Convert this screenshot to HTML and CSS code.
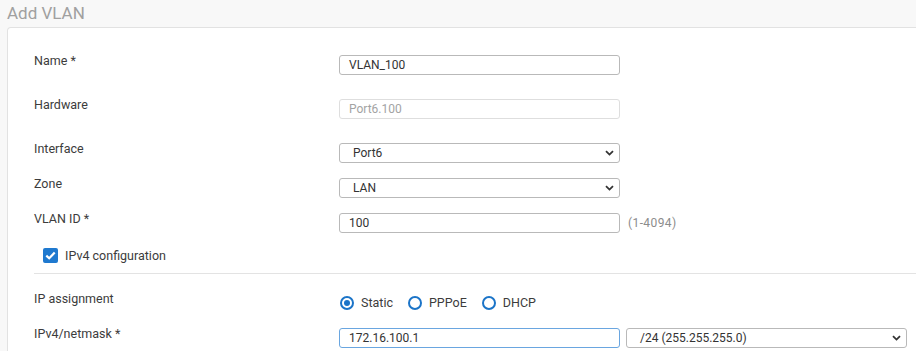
FILE: index.html
```html
<!DOCTYPE html>
<html lang="en">
<head>
  <meta charset="UTF-8">
  <meta name="viewport" content="width=device-width, initial-scale=1.0">
  <title>Add VLAN</title>
  <link rel="stylesheet" href="styles.css">
</head>
<body>
  <!-- page title -->
  <div class="page-title">Add VLAN</div>

  <div class="card">
    <div class="row gap-lg">
      <div class="label">Name *</div>
      <div class="field">VLAN_100</div>
    </div>

    <div class="row gap-lg">
      <div class="label">Hardware</div>
      <div class="field disabled">Port6.100</div>
    </div>

    <div class="row gap-sm">
      <div class="label">Interface</div>
      <div class="field select">
        <span>Port6</span>
        <svg class="chevron" width="9" height="6" viewBox="0 0 9 6"><path d="M1 1.2 L4.5 4.6 L8 1.2" fill="none" stroke="#333" stroke-width="1.8"/></svg>
      </div>
    </div>

    <div class="row gap-sm">
      <div class="label">Zone</div>
      <div class="field select">
        <span>LAN</span>
        <svg class="chevron" width="9" height="6" viewBox="0 0 9 6"><path d="M1 1.2 L4.5 4.6 L8 1.2" fill="none" stroke="#333" stroke-width="1.8"/></svg>
      </div>
    </div>

    <div class="row">
      <div class="label">VLAN ID *</div>
      <div class="field">100</div>
      <span class="hint">(1-4094)</span>
    </div>

    <!-- IPv4 section -->
    <div class="check-row">
      <span class="checkbox">
        <svg width="11" height="9" viewBox="0 0 11 9"><path d="M1.3 4.6 L4.2 7.3 L9.7 1.6" fill="none" stroke="#fff" stroke-width="2.2"/></svg>
      </span>
      <span class="check-text">IPv4 configuration</span>
    </div>

    <div class="divider"></div>

    <div class="row radio-row">
      <div class="label">IP assignment</div>
      <div class="radios">
        <label class="radio"><span class="dot checked"></span>Static</label>
        <label class="radio"><span class="dot"></span>PPPoE</label>
        <label class="radio"><span class="dot"></span>DHCP</label>
      </div>
    </div>

    <div class="row">
      <div class="label">IPv4/netmask *</div>
      <div class="field focused">172.16.100.1</div>
      <div class="field select mask">
        <span>/24 (255.255.255.0)</span>
        <svg class="chevron" width="9" height="6" viewBox="0 0 9 6"><path d="M1 1.2 L4.5 4.6 L8 1.2" fill="none" stroke="#333" stroke-width="1.8"/></svg>
      </div>
    </div>
  </div>
</body>
</html>
```

FILE: styles.css
```css
body {
    margin: 0;
    font-family: Roboto, "Liberation Sans", Arial, sans-serif;
    background-color: #f8f8f8;
    color: #3a3a3a;
    overflow: hidden;
}

/* title bar */
.page-title {
    height: 27px;
    padding-left: 7px;
    font-size: 17px;
    line-height: 26px;
    color: #a0a0a0;
}

.card {
    margin-left: 7px;
    margin-right: -10px;
    background: #fff;
    border: 1px solid #e2e2e2;
    border-bottom: none;
    border-radius: 4px 0 0 0;
    padding: 27px 0 4px 26px;
}

.row {
    display: flex;
    align-items: flex-start;
}

.row.gap-lg {
    margin-bottom: 24px;
}

.row.gap-sm {
    margin-bottom: 15px;
}

.label {
    width: 305px;
    flex-shrink: 0;
    margin-top: -1px;
    font-size: 12.5px;
    line-height: 14px;
    color: #3c3c3c;
}

.field {
    width: 281px;
    height: 20px;
    box-sizing: border-box;
    border: 1px solid #b9b9b9;
    border-radius: 3px;
    padding: 0 9px;
    font-size: 12px;
    line-height: 18px;
    color: #333;
    flex-shrink: 0;
}

.field.disabled {
    border-color: #dedede;
    color: #a3a3a3;
}

.field.focused {
    border-color: #6aa6e0;
}

.field.select {
    display: flex;
    justify-content: space-between;
    align-items: center;
    padding: 0 5px 0 13px;
}

.field.mask {
    margin-left: 6px;
    padding-left: 13px;
}

.chevron {
    display: block;
}

.hint {
    margin-left: 8px;
    font-size: 12px;
    letter-spacing: 0.4px;
    line-height: 20px;
    color: #8c8c8c;
}

/* checkbox */
.check-row {
    display: flex;
    align-items: center;
    margin-top: 14px;
    margin-left: 9px;
    height: 16px;
}

.checkbox {
    width: 15px;
    height: 15px;
    border-radius: 2px;
    background-color: #1f79cf;
    display: flex;
    align-items: center;
    justify-content: center;
}

.check-text {
    margin-left: 7px;
    font-size: 12.5px;
    color: #3c3c3c;
}

.divider {
    height: 1px;
    background-color: #e3e3e3;
    margin-top: 10px;
}

/* radios */
.radio-row {
    margin-top: 19px;
    margin-bottom: 18px;
}

.radios {
    display: flex;
    margin-top: 3px;
    margin-left: 1px;
}

.radio {
    display: flex;
    align-items: center;
    margin-right: 15px;
    font-size: 12.5px;
    line-height: 14px;
    color: #3c3c3c;
}

.dot {
    width: 14px;
    height: 14px;
    box-sizing: border-box;
    border: 2px solid #1b74c8;
    border-radius: 50%;
    margin-right: 7px;
    display: flex;
    align-items: center;
    justify-content: center;
}

.dot.checked::after {
    content: "";
    width: 6px;
    height: 6px;
    border-radius: 50%;
    background-color: #1b74c8;
}
```
